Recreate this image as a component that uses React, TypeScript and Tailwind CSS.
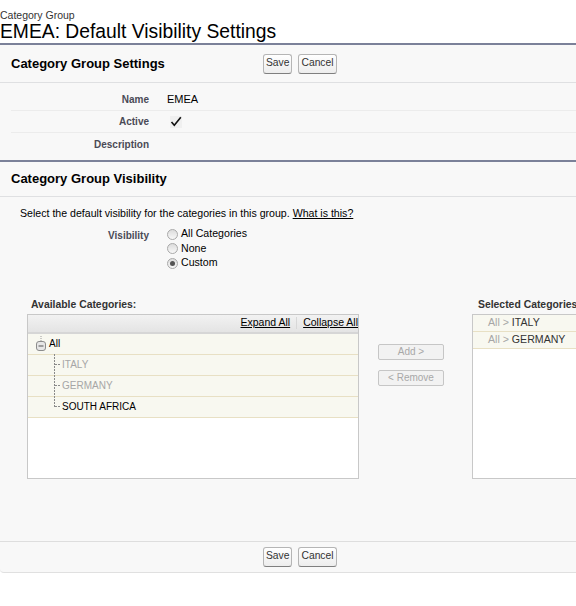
import React from "react";

const font = "font-['Liberation_Sans',Arial,Helvetica,sans-serif]";

function Btn({ children }: { children: React.ReactNode }) {
  return (
    <button className="h-[20px] rounded-[3px] border border-[#b5b5b5] border-b-[#7f7f7f] bg-gradient-to-b from-white to-[#ededed] px-[2px] text-[10.3px] leading-none text-[#333]">
      {children}
    </button>
  );
}

function SectionHeader({ title, buttons }: { title?: string; buttons?: boolean }) {
  return (
    <div className="flex h-[38px] items-center border-b border-[#dfe0e2]">
      <div className="w-[263px] pl-[11px] text-[13px] font-bold text-[#000]">{title}</div>
      {buttons && (
        <div className="flex gap-[6px]">
          <Btn>Save</Btn>
          <Btn>Cancel</Btn>
        </div>
      )}
    </div>
  );
}

function DetailRow({ label, children, last }: { label: string; children?: React.ReactNode; last?: boolean }) {
  return (
    <div className={`ml-[11px] flex h-[22px] items-center ${last ? "" : "border-b border-[#ececec]"}`}>
      <div className="w-[138px] text-right text-[10px] font-bold text-[#4a4a56]">{label}</div>
      <div className="pl-[18px] text-[11px] text-black">{children}</div>
    </div>
  );
}

function Radio({ checked, label }: { checked?: boolean; label: string }) {
  return (
    <div className="flex h-[14.5px] items-center">
      <span className="mr-[3px] flex h-[11px] w-[11px] items-center justify-center rounded-full border border-[#a9a9a9] bg-gradient-to-b from-[#dcdcdc] to-[#f8f8f8]">
        {checked && <span className="h-[5px] w-[5px] rounded-full bg-[#555]" />}
      </span>
      <span className="text-[10.6px] text-black">{label}</span>
    </div>
  );
}

function Connector({ last }: { last?: boolean }) {
  return (
    <svg width="9" height="21" viewBox="0 0 9 21" className="shrink-0">
      <line x1="1.5" y1="0" x2="1.5" y2={last ? 11 : 21} stroke="#8a8a8a" strokeDasharray="2 1" />
      <line x1="2" y1="10.5" x2="8" y2="10.5" stroke="#8a8a8a" strokeDasharray="2 1" />
    </svg>
  );
}

function TreeRow({ children }: { children: React.ReactNode }) {
  return (
    <div className="flex h-[21px] items-center border-b border-[#e8e0c4] bg-[#f8f8f0] text-[10px]">
      {children}
    </div>
  );
}

function SideBtn({ children }: { children: React.ReactNode }) {
  return (
    <div className="flex h-[16px] w-[66px] items-center justify-center rounded-[2px] border border-[#c6c6c6] bg-[#f2f2f2] text-[10px] text-[#a8a8a8]">
      {children}
    </div>
  );
}

export default function App() {
  return (
    <div className={`h-[606px] w-[576px] overflow-hidden bg-white ${font}`}>
      <div className="w-[700px]">
        <div className="pt-[9px]">
          <div className="text-[10.5px] leading-[12px] text-[#333]">Category Group</div>
          <h1 className="text-[19.3px] leading-[21px] text-black">EMEA: Default Visibility Settings</h1>
        </div>

        <div className="mt-[1px] rounded-b-[4px] border-b border-[#e0e0e0] bg-[#f8f8f8]">
          <div className="border-t-2 border-[#7b8199]">
            <SectionHeader title="Category Group Settings" buttons />
            <div className="pt-[6px] pb-[5px]">
              <DetailRow label="Name">EMEA</DetailRow>
              <DetailRow label="Active">
                <span className="ml-[3px] flex h-[12px] w-[12px] items-center justify-center bg-[#f0f0f0]">
                  <svg width="12" height="11" viewBox="0 0 12 11">
                    <path d="M1.5 6 L4.3 9.3 L10.8 1.2" fill="none" stroke="#111" strokeWidth="1.6" />
                  </svg>
                </span>
              </DetailRow>
              <DetailRow label="Description" last />
            </div>
          </div>

          <div className="border-t-2 border-[#7b8199]">
            <div className="flex h-[35px] items-center border-b border-[#dfe0e2] pl-[11px] text-[13px] font-bold text-black">
              Category Group Visibility
            </div>
            <div className="pt-[9px]">
              <div className="pl-[20px] text-[10.6px] leading-[14px] text-black">
                Select the default visibility for the categories in this group.{" "}
                <span className="underline">What is this?</span>
              </div>
              <div className="mt-[7px] flex">
                <div className="w-[149px] pt-[1px] text-right text-[10px] font-bold text-[#4a4a56]">Visibility</div>
                <div className="pl-[18px]">
                  <Radio label="All Categories" />
                  <Radio label="None" />
                  <Radio label="Custom" checked />
                </div>
              </div>

              <div className="mt-[27px] flex pl-[27px]">
                <div className="w-[332px]">
                  <div className="pl-[4px] text-[10.4px] font-bold leading-[13px] text-[#333]">Available Categories:</div>
                  <div className="mt-[3px] h-[165px] border border-[#c8c8c8] bg-white">
                    <div className="flex h-[19px] items-center justify-end border-b-2 border-[#d6d6d6] bg-gradient-to-b from-[#f2f2f2] to-[#e4e4e4] text-[10.5px] text-black">
                      <span className="underline">Expand All</span>
                      <span className="mx-[6px] h-[12px] w-px bg-[#d8d8d8]" />
                      <span className="underline">Collapse All</span>
                    </div>
                    <TreeRow>
                      <svg width="12" height="16" viewBox="0 0 12 16" className="ml-[7px] mr-[2px] shrink-0">
                        <line x1="6" y1="0" x2="6" y2="5" stroke="#9a9a9a" strokeDasharray="1 1" />
                        <rect x="1.5" y="5.5" width="9" height="9" rx="2.5" fill="#e6e6e6" stroke="#8c8c8c" />
                        <line x1="3.5" y1="10" x2="8.5" y2="10" stroke="#555" />
                      </svg>
                      <span className="text-black">All</span>
                    </TreeRow>
                    <TreeRow>
                      <span className="ml-[25px]"><Connector /></span>
                      <span className="text-[#a6a6a6]">ITALY</span>
                    </TreeRow>
                    <TreeRow>
                      <span className="ml-[25px]"><Connector /></span>
                      <span className="text-[#a6a6a6]">GERMANY</span>
                    </TreeRow>
                    <TreeRow>
                      <span className="ml-[25px]"><Connector last /></span>
                      <span className="text-black">SOUTH AFRICA</span>
                    </TreeRow>
                  </div>
                </div>

                <div className="flex w-[113px] flex-col gap-[10px] pl-[19px] pt-[46px]">
                  <SideBtn>Add &gt;</SideBtn>
                  <SideBtn>&lt; Remove</SideBtn>
                </div>

                <div className="w-[200px]">
                  <div className="pl-[6px] text-[10.4px] font-bold leading-[13px] text-[#333]">Selected Categories</div>
                  <div className="mt-[3px] h-[165px] border border-[#c8c8c8] bg-white">
                    <div className="flex h-[17px] items-center border-b border-[#e8e0c4] bg-[#f8f8f0] pl-[15px] text-[10.6px]">
                      <span className="text-[#a6a6a6]">All &gt;&nbsp;</span>
                      <span className="text-[#333]">ITALY</span>
                    </div>
                    <div className="flex h-[17px] items-center border-b border-[#e8e0c4] bg-[#f8f8f0] pl-[15px] text-[10.6px]">
                      <span className="text-[#a6a6a6]">All &gt;&nbsp;</span>
                      <span className="text-[#333]">GERMANY</span>
                    </div>
                  </div>
                </div>
              </div>
              <div className="h-[62px]" />
            </div>
          </div>

          <div className="flex h-[31px] items-center border-t border-[#dedede]">
            <div className="w-[263px]" />
            <div className="flex gap-[6px]">
              <Btn>Save</Btn>
              <Btn>Cancel</Btn>
            </div>
          </div>
        </div>
      </div>
    </div>
  );
}
